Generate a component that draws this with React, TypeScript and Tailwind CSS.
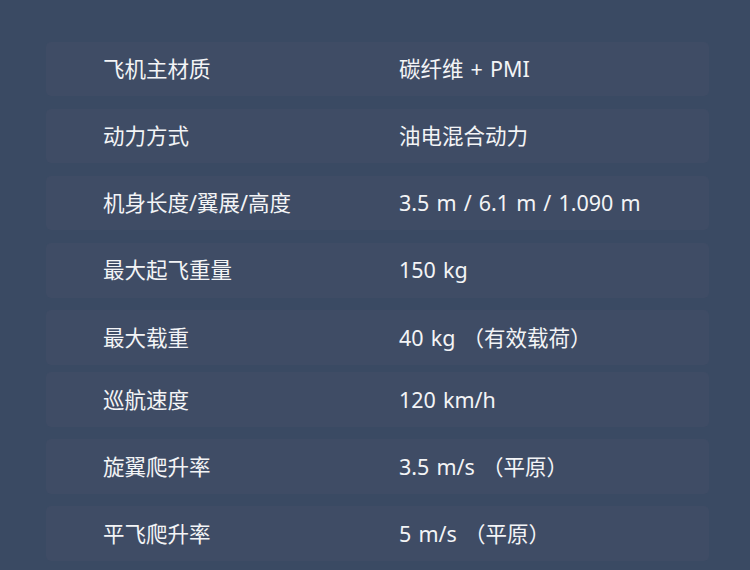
const specs = [
  { label: "飞机主材质", value: "碳纤维 + PMI" },
  { label: "动力方式", value: "油电混合动力" },
  { label: "机身长度/翼展/高度", value: "3.5 m / 6.1 m / 1.090 m" },
  { label: "最大起飞重量", value: "150 kg" },
  { label: "最大载重", value: "40 kg （有效载荷）", tight: true },
  { label: "巡航速度", value: "120 km/h" },
  { label: "旋翼爬升率", value: "3.5 m/s （平原）" },
  { label: "平飞爬升率", value: "5 m/s （平原）" },
];

export default function App() {
  return (
    <div
      className="w-[750px] h-[570px] overflow-hidden bg-[#3a4a63] pt-[41.5px] pl-[46px]"
      style={{ fontFamily: '"Noto Sans", "Noto Sans CJK SC", sans-serif' }}
    >
      <div className="flex flex-col w-[663px]">
        {specs.map((s, i) => (
          <div
            key={i}
            className={`flex items-center h-[54.8px] rounded-[5px] bg-[#3f4c65] pl-[57px] text-[21.5px] leading-none text-[#f3f4f6] ${
              s.tight ? "mb-[7.3px]" : "mb-[12.3px]"
            }`}
          >
            <div className="w-[296px] shrink-0">{s.label}</div>
            <div className="[word-spacing:1.5px]">{s.value}</div>
          </div>
        ))}
      </div>
    </div>
  );
}
